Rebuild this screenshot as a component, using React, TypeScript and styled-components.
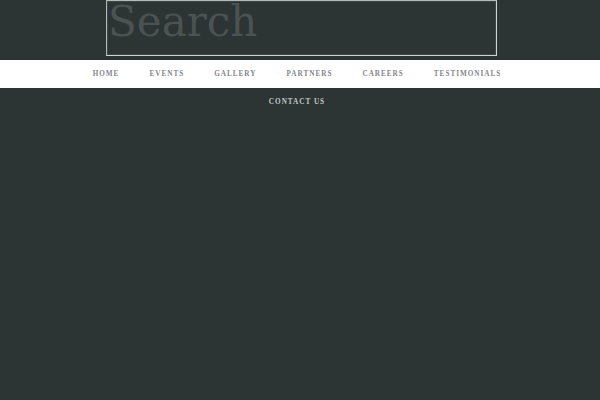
import React from 'react'
import styled, { createGlobalStyle } from 'styled-components'

const GlobalStyle = createGlobalStyle`
  html, body {
    margin: 0;
    padding: 0;
    background: #2d3434;
  }
`

const Header = styled.header`
  display: flex;
  flex-direction: column;
`

const SearchRow = styled.div`
  display: flex;
  padding-left: 106px;
  height: 60px;
`

const SearchInput = styled.input`
  box-sizing: border-box;
  width: 391px;
  height: 56px;
  margin: 0;
  padding: 0 0 14px 1px;
  background: #2d3434;
  border: 1px solid #c9d6d6;
  border-top-color: #b4baba;
  border-left-color: #b4baba;
  box-shadow: inset 0 0 0 1px #3d4545;
  font-family: 'DejaVu Serif', serif;
  font-size: 42px;
  color: #4a5252;
  outline: none;

  &::placeholder {
    color: #4a5252;
  }
`

/* white strip only behind the first row; wrapped items sit on the page colour */
const NavBar = styled.nav`
  background: linear-gradient(to bottom, #ffffff 28px, transparent 28px);
  padding-right: 6px;
`

const NavList = styled.ul`
  list-style: none;
  margin: 0 auto;
  padding: 0;
  width: 440px;
  display: flex;
  flex-wrap: wrap;
  justify-content: center;
  column-gap: 30px;
`

const NavItem = styled.li<{ $wrapped?: boolean }>`
  height: 28px;
  line-height: 29px;
  font-family: 'Liberation Serif', serif;
  font-weight: bold;
  font-size: 7.2px;
  letter-spacing: 1px;
  text-transform: uppercase;
  color: ${(p) => (p.$wrapped ? '#c4caca' : '#86868e')};
  cursor: pointer;
`

const items = ['Home', 'Events', 'Gallery', 'Partners', 'Careers', 'Testimonials', 'Contact Us']

export default function App() {
  return (
    <>
      <GlobalStyle />
      <Header>
        <SearchRow>
          <SearchInput type="text" placeholder="Search" />
        </SearchRow>
        <NavBar>
          <NavList>
            {items.map((label, i) => (
              <NavItem key={label} $wrapped={i === items.length - 1}>
                {label}
              </NavItem>
            ))}
          </NavList>
        </NavBar>
      </Header>
    </>
  )
}
